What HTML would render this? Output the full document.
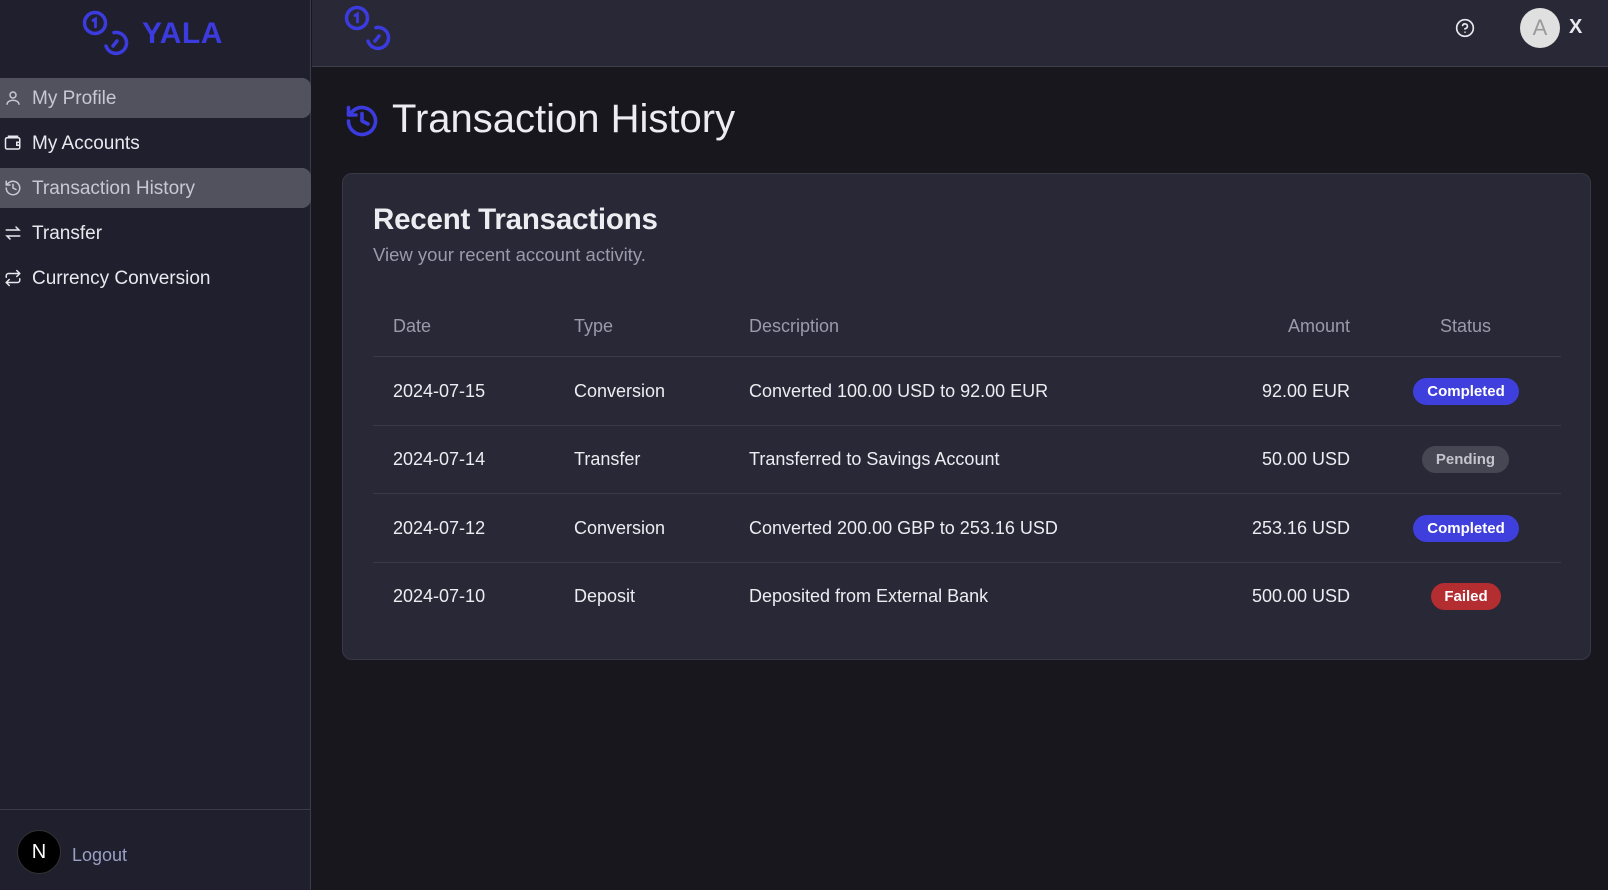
<!DOCTYPE html>
<html><head><meta charset="utf-8"><style>
*{box-sizing:border-box;margin:0;padding:0}
body{width:1608px;height:890px;background:#17171d;font-family:"Liberation Sans",sans-serif;color:#ececf1;position:relative;overflow:hidden}
.side{position:absolute;left:0;top:0;width:311px;height:890px;background:#1f1f2d;border-right:1px solid #3a3a48}
.hdr{position:absolute;left:312px;top:0;right:0;height:67px;background:#282836;border-bottom:1px solid #3e3e4c}
.nav{position:absolute;left:0;width:311px;height:40px;border-radius:0 9px 9px 0;display:flex;align-items:center;font-size:19px;color:#e8e8ee}
.nav.on{background:#52525f;color:#c8c8d4}
.nav svg{position:absolute;left:4px}
.nav span{position:absolute;left:32px;top:10px}
.card{position:absolute;left:342px;top:173px;width:1249px;height:487px;background:#282836;border:1px solid #383846;border-radius:10px}
.row{position:absolute;left:373px;width:1188px;font-size:18px;color:#ececf1}
.row div{position:absolute;top:0}
.line{position:absolute;left:373px;width:1188px;height:1px;background:#3a3a48}
.badge{position:absolute;height:27px;border-radius:14px;font-weight:bold;font-size:15px;color:#fff;text-align:center;line-height:27px}
</style></head><body>
<div class="side">
 <svg style="position:absolute;left:80px;top:5px" width="60" height="55" viewBox="0 0 60 55" fill="none" stroke="#3b3be0" stroke-width="3.5" stroke-linecap="round"><circle cx="15" cy="18" r="10.5"/><path d="M13 15.5l2.5-1.5v8" stroke-width="2.8"/><path d="M34 27.6A10.5 10.5 0 1 1 26 41"/><path d="M33 41L37 36"/></svg>
 <div style="position:absolute;left:142px;top:17px;font-size:30px;font-weight:bold;color:#3b3be0;letter-spacing:0.5px">YALA</div>
 <div class="nav on" style="top:78px"><svg width="18" height="18" viewBox="0 0 24 24" fill="none" stroke="#c8c8d4" stroke-width="2"><circle cx="12" cy="8" r="4"/><path d="M4 21c0-4 4-6 8-6s8 2 8 6"/></svg><span>My Profile</span></div>
 <div class="nav" style="top:123px"><svg width="18" height="18" viewBox="0 0 24 24" fill="none" stroke="#e8e8ee" stroke-width="2"><rect x="2" y="5" width="19" height="15" rx="2"/><path d="M6 5V3h12v2M21 11h-4v4h4"/></svg><span>My Accounts</span></div>
 <div class="nav on" style="top:168px"><svg width="18" height="18" viewBox="0 0 24 24" fill="none" stroke="#c8c8d4" stroke-width="2" stroke-linecap="round"><path d="M3 12a9 9 0 1 0 3-6.7L3 8M3 3v5h5M12 7v5l4 2"/></svg><span>Transaction History</span></div>
 <div class="nav" style="top:213px"><svg width="18" height="18" viewBox="0 0 24 24" fill="none" stroke="#e8e8ee" stroke-width="2" stroke-linecap="round"><path d="M3 8h17l-4-4M21 16H4l4 4"/></svg><span>Transfer</span></div>
 <div class="nav" style="top:258px"><svg width="18" height="18" viewBox="0 0 24 24" fill="none" stroke="#e8e8ee" stroke-width="2" stroke-linecap="round"><path d="M17 2l4 4-4 4M3 11V9a3 3 0 0 1 3-3h15M7 22l-4-4 4-4M21 13v2a3 3 0 0 1-3 3H3"/></svg><span>Currency Conversion</span></div>
 <div style="position:absolute;left:0;top:809px;width:311px;height:1px;background:#3a3a48"></div>
 <div style="position:absolute;left:17px;top:830px;width:44px;height:44px;border-radius:50%;background:#000;border:1px solid #333;color:#fff;font-size:20px;text-align:center;line-height:42px">N</div>
 <div style="position:absolute;left:72px;top:845px;font-size:18px;color:#9aa0c4">Logout</div>
</div>
<div class="hdr">
 <svg style="position:absolute;left:30px;top:0px" width="60" height="55" viewBox="0 0 60 55" fill="none" stroke="#3b3be0" stroke-width="3.5" stroke-linecap="round"><circle cx="15" cy="18" r="10.5"/><path d="M13 15.5l2.5-1.5v8" stroke-width="2.8"/><path d="M34 27.6A10.5 10.5 0 1 1 26 41"/><path d="M33 41L37 36"/></svg>
 <svg style="position:absolute;left:1143px;top:18px" width="20" height="20" viewBox="0 0 24 24" fill="none" stroke="#e8e8ee" stroke-width="2" stroke-linecap="round"><circle cx="12" cy="12" r="10"/><path d="M9.1 9a3 3 0 0 1 5.8 1c0 2-3 3-3 3M12 17h.01"/></svg>
 <div style="position:absolute;left:1208px;top:8px;width:40px;height:40px;border-radius:50%;background:#e0e0e0;color:#9a9a9a;font-size:22px;text-align:center;line-height:40px">A</div>
 <div style="position:absolute;left:1257px;top:16px;font-size:20px;font-weight:bold;color:#e8e8ee">X</div>
</div>
<svg style="position:absolute;left:344px;top:103px" width="36" height="36" viewBox="0 0 24 24" fill="none" stroke="#3b3be0" stroke-width="2.4" stroke-linecap="round" stroke-linejoin="round"><path d="M3 12a9 9 0 1 0 3-6.7L3 8M3 3v5h5M12 7v5l4 2"/></svg>
<div style="position:absolute;left:392px;top:97px;font-size:40px;color:#ececf1">Transaction History</div>
<div class="card"></div>
<div style="position:absolute;left:373px;top:203px;font-size:29.5px;font-weight:bold;color:#ececf1;letter-spacing:-0.2px">Recent Transactions</div>
<div style="position:absolute;left:373px;top:244px;font-size:18.5px;color:#9a9aab">View your recent account activity.</div>
<div class="row" style="top:316px;color:#9a9aab"><div style="left:20px">Date</div><div style="left:201px">Type</div><div style="left:376px">Description</div><div style="right:211px">Amount</div><div style="left:1067px">Status</div></div>
<div class="line" style="top:356px"></div>
<div class="row" style="top:381px"><div style="left:20px">2024-07-15</div><div style="left:201px">Conversion</div><div style="left:376px">Converted 100.00 USD to 92.00 EUR</div><div style="right:211px">92.00 EUR</div></div>
<div class="badge" style="left:1413px;top:378px;width:106px;background:#3f3fdd">Completed</div>
<div class="line" style="top:425px"></div>
<div class="row" style="top:449px"><div style="left:20px">2024-07-14</div><div style="left:201px">Transfer</div><div style="left:376px">Transferred to Savings Account</div><div style="right:211px">50.00 USD</div></div>
<div class="badge" style="left:1422px;top:446px;width:87px;background:#474754;color:#c4c4cc">Pending</div>
<div class="line" style="top:493px"></div>
<div class="row" style="top:518px"><div style="left:20px">2024-07-12</div><div style="left:201px">Conversion</div><div style="left:376px">Converted 200.00 GBP to 253.16 USD</div><div style="right:211px">253.16 USD</div></div>
<div class="badge" style="left:1413px;top:515px;width:106px;background:#3f3fdd">Completed</div>
<div class="line" style="top:562px"></div>
<div class="row" style="top:586px"><div style="left:20px">2024-07-10</div><div style="left:201px">Deposit</div><div style="left:376px">Deposited from External Bank</div><div style="right:211px">500.00 USD</div></div>
<div class="badge" style="left:1431px;top:583px;width:70px;background:#b32d31">Failed</div>
</body></html>
